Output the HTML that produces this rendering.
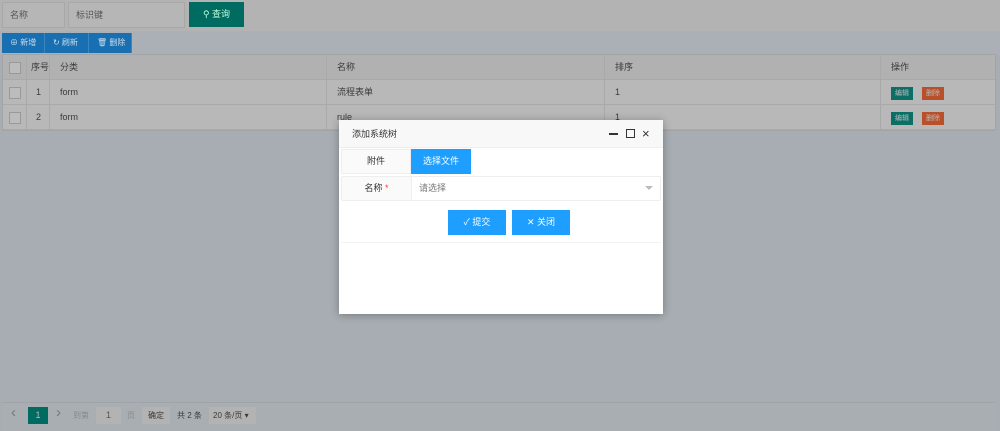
<!DOCTYPE html>
<html><head><meta charset="utf-8"><style>
*{box-sizing:border-box;margin:0;padding:0}
body{width:1000px;height:431px;overflow:hidden;background:#a7adb2;font-family:"Liberation Sans","Noto Sans CJK SC",sans-serif;font-size:9px;color:#3a3a3a;position:relative}
.abs{position:absolute}
.inp{background:#b6b6b6;border:1px solid #a8a8a8;color:#555;padding-left:7px;line-height:24px;font-size:9px}
.tb{background:#1870b2;color:#cde;line-height:20px;font-size:8px;padding-left:8px;border-right:1px solid #3c85bd}
.row{left:3px;width:992px;height:25px;background:#b8b8b8;border-bottom:1px solid #a9a9a9}
.hd{background:#b1b1b1}
.c{position:absolute;top:0;height:100%;border-left:1px solid #a9a9a9;line-height:25px;padding-left:10px}
.cb{position:absolute;left:6px;top:7px;width:12px;height:12px;border:1px solid #999;background:#bcbcbc}
.b{position:absolute;top:7px;width:22px;height:13px;font-size:7px;line-height:13px;text-align:center;color:#bbb}
</style></head><body>
<div class="abs" style="left:0;top:0;width:1000px;height:31px;background:#b3b3b3"></div>
<div class="abs" style="left:0;top:31px;width:1000px;height:24px;background:#aab0b5"></div>
<div class="abs inp" style="left:2px;top:2px;width:63px;height:26px">名称</div>
<div class="abs inp" style="left:68px;top:2px;width:117px;height:26px">标识键</div>
<div class="abs" style="left:189px;top:2px;width:55px;height:25px;background:#006b61;color:#bfd;line-height:25px;text-align:center;font-size:9px">&#9906; 查询</div>
<div class="abs tb" style="left:2px;top:33px;width:43px;height:20px">⊕ 新增</div>
<div class="abs tb" style="left:45px;top:33px;width:44px;height:20px">↻ 刷新</div>
<div class="abs tb" style="left:89px;top:33px;width:43px;height:20px">🗑 删除</div>
<div class="abs" style="left:2px;top:54px;width:994px;height:77px;background:#b8b8b8;border:1px solid #a4a4a4"></div>
<div class="abs row hd" style="top:55px"><div class="cb"></div><div class="c" style="left:23px;padding-left:4px">序号</div><div class="c" style="left:46px">分类</div><div class="c" style="left:323px">名称</div><div class="c" style="left:601px">排序</div><div class="c" style="left:877px">操作</div></div>
<div class="abs row" style="top:80px"><div class="cb"></div><div class="c" style="left:23px;padding-left:9px">1</div><div class="c" style="left:46px">form</div><div class="c" style="left:323px">流程表单</div><div class="c" style="left:601px">1</div><div class="c" style="left:877px"><div class="b" style="left:10px;background:#0c6f66">编辑</div><div class="b" style="left:41px;background:#b8502a">删除</div></div></div>
<div class="abs row" style="top:105px"><div class="cb"></div><div class="c" style="left:23px;padding-left:9px">2</div><div class="c" style="left:46px">form</div><div class="c" style="left:323px">rule</div><div class="c" style="left:601px">1</div><div class="c" style="left:877px"><div class="b" style="left:10px;background:#0c6f66">编辑</div><div class="b" style="left:41px;background:#b8502a">删除</div></div></div>
<div class="abs" style="left:2px;top:402px;width:994px;height:29px;background:#a9aeb3;border-top:1px solid #a0a4a8"></div>
<div class="abs" style="left:11px;top:404px;font-size:15px;color:#777">‹</div>
<div class="abs" style="left:28px;top:407px;width:20px;height:17px;background:#006b61;color:#bbb;text-align:center;line-height:17px">1</div>
<div class="abs" style="left:56px;top:404px;font-size:15px;color:#777">›</div>
<div class="abs" style="left:73px;top:410px;color:#888;font-size:8px">到第</div>
<div class="abs" style="left:96px;top:407px;width:25px;height:17px;background:#b3b3b3;text-align:center;line-height:17px;color:#555">1</div>
<div class="abs" style="left:127px;top:410px;color:#888;font-size:8px">页</div>
<div class="abs" style="left:142px;top:407px;width:28px;height:17px;background:#b3b3b3;text-align:center;line-height:17px;font-size:8px">确定</div>
<div class="abs" style="left:177px;top:410px;font-size:8px">共 2 条</div>
<div class="abs" style="left:209px;top:407px;width:47px;height:17px;background:#b3b3b3;line-height:17px;padding-left:4px;font-size:8px">20 条/页 ▾</div>

<div class="abs" style="left:339px;top:120px;width:324px;height:194px;background:#fff;box-shadow:0 1px 8px rgba(0,0,0,.3)">
<div style="height:28px;background:#f8f8f8;border-bottom:1px solid #eee;line-height:28px;padding-left:13px;font-size:9px;color:#333">添加系统树
<span class="abs" style="left:270px;top:13px;width:9px;height:2px;background:#333"></span>
<span class="abs" style="left:287px;top:9px;width:9px;height:9px;border:1px solid #333"></span>
<span class="abs" style="left:303px;top:0;font-size:13px;color:#333">×</span></div>
<div class="abs" style="left:2px;top:29px;width:70px;height:25px;background:#fafafa;border:1px solid #eee;text-align:center;line-height:23px;color:#333">附件</div>
<div class="abs" style="left:72px;top:29px;width:60px;height:25px;background:#1e9fff;color:#fff;text-align:center;line-height:25px">选择文件</div>
<div class="abs" style="left:2px;top:56px;width:320px;height:25px;border:1px solid #eee;border-radius:2px"></div>
<div class="abs" style="left:3px;top:57px;width:70px;height:23px;background:#fafafa;border-right:1px solid #eee;text-align:center;line-height:23px;color:#333">名称 <span style="color:#f33">*</span></div>
<div class="abs" style="left:80px;top:57px;line-height:23px;color:#777">请选择</div>
<div class="abs" style="left:306px;top:66px;border:4px solid transparent;border-top:4px solid #bbb"></div>
<div class="abs" style="left:109px;top:90px;width:58px;height:25px;background:#1e9fff;color:#fff;text-align:center;line-height:25px">✓ 提交</div>
<div class="abs" style="left:173px;top:90px;width:58px;height:25px;background:#1e9fff;color:#fff;text-align:center;line-height:25px">✕ 关闭</div>
<div class="abs" style="left:2px;top:122px;width:320px;height:1px;background:#f2f2f2"></div>
</div>
</body></html>
